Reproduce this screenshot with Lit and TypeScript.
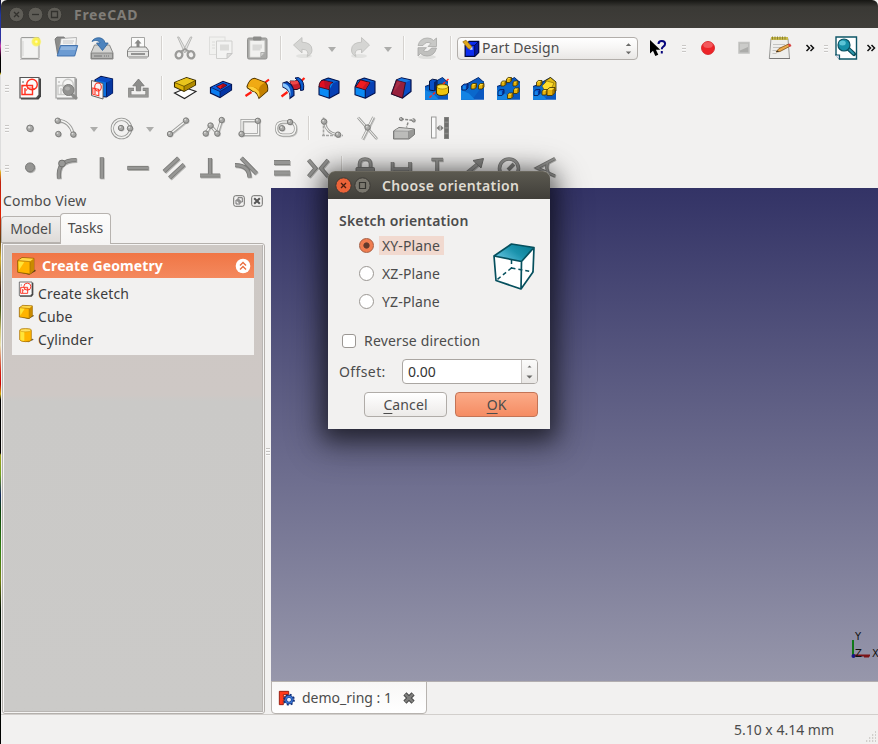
import { LitElement, html, svg, css, SVGTemplateResult } from "lit";
import { customElement, property } from "lit/decorators.js";

const node = (x: number, y: number, r = 2.7) => svg`
  <circle cx=${x + 0.8} cy=${y + 0.8} r=${r} fill="#999" opacity=".6"/>
  <circle cx=${x} cy=${y} r=${r} fill="#a9a9a7" stroke="#777775" stroke-width=".9"/>
  <circle cx=${x - 0.8} cy=${y - 0.9} r=${r * 0.35} fill="#dededc"/>`;

const tube = (d: string, w = 3) => svg`
  <path d=${d} transform="translate(.8 .8)" fill="none" stroke="#c2c2c0" stroke-width=${w}/>
  <path d=${d} fill="none" stroke="#999997" stroke-width=${w}/>
  <path d=${d} fill="none" stroke="#f4f4f2" stroke-width=${w - 1.5}/>`;

const bar = (d: string, w = 4.2) => svg`
  <path d=${d} transform="translate(.8 .9)" fill="none" stroke="#b3b3b1" stroke-width=${w}/>
  <path d=${d} fill="none" stroke="#787876" stroke-width=${w}/>
  <path d=${d} fill="none" stroke="#969694" stroke-width=${w - 1.6}/>`;

const cubelet = (x: number, y: number, s: number, front: string, top: string, side: string, line = "#3a2e00") => svg`
  <path d="M${x} ${y + s * 0.3}l${s * 0.35} ${-s * 0.3}h${s * 0.65}v${s * 0.65}l${-s * 0.35} ${s * 0.35}h${-s * 0.65}z" fill=${front}/>
  <path d="M${x} ${y + s * 0.3}l${s * 0.35} ${-s * 0.3}h${s * 0.65}l${-s * 0.35} ${s * 0.3}z" fill=${top}/>
  <path d="M${x + s * 0.65} ${y + s * 0.3}l${s * 0.35} ${-s * 0.3}v${s * 0.65}l${-s * 0.35} ${s * 0.35}z" fill=${side}/>
  <path d="M${x} ${y + s * 0.3}l${s * 0.35} ${-s * 0.3}h${s * 0.65}v${s * 0.65}l${-s * 0.35} ${s * 0.35}h${-s * 0.65}z" fill="none" stroke=${line} stroke-width=".8" stroke-linejoin="round"/>`;
const gold = (x: number, y: number, s: number) => cubelet(x, y, s, "#e8b40c", "#ffdc3a", "#a87c00");
const azure = (x: number, y: number, s: number) => cubelet(x, y, s, "#1284ec", "#0b5cd0", "#0638a0", "#06134e");

const sketchPage = (c: string) => svg`
  <path d="M3 2.5h20v18l-2.500 3H3z" fill="#444"/>
  <path d="M2 1.500h19v17.500l-2.500 3H2z" fill="#fbfbfb" stroke="#555" stroke-width="1.200"/>
  <path d="M5 5v2M4 6h2M5 10v1" stroke="#888" stroke-width=".8"/>
  <circle cx="14" cy="8.500" r="5.300" fill="none" stroke=${c} stroke-width="1.400"/>
  <path d="M4 9.500h10.500v9H4zM7 12v6" fill="none" stroke=${c} stroke-width="1.400"/>
  <path d="M8 15q1-5 9-2" fill="none" stroke=${c} stroke-width=".8"/>`;

const goldCube = svg`
  <path d="M6 20l17-3.500.8 1.500-8 4.500z" fill="#3a2c00" opacity=".8"/>
  <path d="M2 5.500l5-3.500 14.500.8v14.500l-4.500 4.500L2 19.500z" fill="#ffb400" stroke="#8a5a00" stroke-width="1"/>
  <path d="M2.500 5.500l5-3 13.500.8-4.500 3.500z" fill="#ffd84a"/>
  <path d="M16.800 7l4.500-4v14l-4.300 4.300z" fill="#c98a00"/>
  <path d="M2 5.500l14.800 1.300v14.700" fill="none" stroke="#a06a00" stroke-width=".8"/>
  <path d="M3 6.500l7 .7-6.500 10z" fill="#ffe438"/>`;

const blueSolid = svg`
  <path d="M2 11L4.700 4.500l6.600-2.500L22 5.300V17l-9.700 5.200L2 18.700z" fill="#0a8af4"/>
  <path d="M4.700 4.500l6.600-2.500L22 5.300l-5.700 1.500z" fill="#0b60d0"/>
  <path d="M12.300 13.700l4-7L22 5.300V17l-9.700 5z" fill="#0740b4"/>
  <path d="M2 11L4.700 4.500l6.600-2.500L22 5.300V17l-9.700 5.200L2 18.700zM12.300 13.700V22" fill="none" stroke="#06134e" stroke-width="1.100" stroke-linejoin="round"/>`;

const patternBase = svg`
  <path d="M0 10.500L4 9 17.500 1.500 23 6.500V23.700H0z" fill="#0a58c0"/>
  <path d="M0 12L23 5v3L11 23.700H0z" fill="#0a68cc"/>
  <path d="M0 23.700V14l8 3.500 6 6.200z" fill="#1484e4"/>
  <path d="M0 10.500L4 9 17.500 1.500 23 6.500" fill="none" stroke="#052a70" stroke-width="1"/>`;

const icons: Record<string, SVGTemplateResult> = {
  newDoc: svg`<defs><radialGradient id="g"><stop offset="0" stop-color="#fffde0"/><stop offset=".4" stop-color="#fff240"/><stop offset=".75" stop-color="#f8ef50" stop-opacity=".75"/><stop offset="1" stop-color="#fff68a" stop-opacity="0"/></radialGradient></defs>
    <path d="M2 23.300h20" stroke="#bbb" stroke-width="1"/>
    <rect x="3" y="1.500" width="18" height="21" rx="1" fill="#e9e9e7" stroke="#9c9c9a"/>
    <rect x="4.500" y="3" width="15" height="18" fill="#f3f3f2"/><path d="M5 5v15" stroke="#d5d5d3"/>
    <circle cx="18.300" cy="5.700" r="5.500" fill="url(#g)"/>`,
  open: svg`<path d="M1 3l2-2h7l1.500 2h8.500v15H3.500z" fill="#8c8c8a" stroke="#70706e" stroke-width=".8"/>
    <path d="M7 2.500l15.500-1-1 13H5z" fill="#f4f4f3" stroke="#999" stroke-width=".7"/><path d="M9 5h11M9 7h10" stroke="#bbb" stroke-width=".8"/>
    <path d="M6.500 9.500h17.200l-3 10.500H3.200z" fill="#6c9bd2" stroke="#3a6ba8" stroke-width=".9"/><path d="M7.300 10.500h15l-1 3.500H6z" fill="#8fb4de"/>`,
  save: svg`<path d="M4.500 9h15l3.500 8v6H1v-6z" fill="#d4d4d2" stroke="#8b8b89"/>
    <path d="M1.500 17h21v5.500h-21z" fill="#b3b3b1" stroke="#7c7c7a" stroke-width=".8"/><path d="M4 20h8M14 20h1M16 20h1M18 20h1" stroke="#777"/>
    <path d="M2 5.500C4 .5 14 0 15 7h3.200L12.500 14.500 6.500 7h3.500C9.300 4.300 5 3.800 2 5.500z" fill="#4c83be" stroke="#2f6299" stroke-width=".8"/>`,
  print: svg`<path d="M5.500 12V1.500h13V12" fill="#fbfbfa" stroke="#a6a6a4"/>
    <path d="M12 3.500l3.500 4h-2V11h-3V7.500h-2z" fill="#888886"/>
    <path d="M4 11h16l2.500 3.500v5.500q0 1-1 1h-19q-1 0-1-1v-5.500z" fill="#e6e6e4" stroke="#828280"/>
    <path d="M2 15.500h20" stroke="#aaa"/><path d="M5 18h14" stroke="#777" stroke-width="1.500"/><path d="M3 22.500h18" stroke="#c4c4c2"/>`,
  cut: svg`<path d="M4.500 1l1.500 0L14 15.500l-2.500 1zM19 1l-1.500 0L9.500 15.500l2.500 1z" fill="#e5e5e4" stroke="#b3b3b1" stroke-width=".9"/>
    <ellipse cx="6" cy="18.800" rx="3.300" ry="3.600" transform="rotate(30 6 18.800)" fill="none" stroke="#9b9b99" stroke-width="2.300"/>
    <ellipse cx="18" cy="18.800" rx="3.300" ry="3.600" transform="rotate(-30 18 18.800)" fill="none" stroke="#9b9b99" stroke-width="2.300"/>
    <path d="M8 15.500l4-2.500 4 2.500" stroke="#9b9b99" stroke-width="1.800" fill="none"/>`,
  copy: svg`<rect x=".5" y="1" width="15.500" height="17.500" fill="#f1f1ef" stroke="#dededc"/><path d="M3 6h3M3 9h3M3 12h3" stroke="#dcdcda"/>
    <path d="M7.500 5H23v12.500L18 22.500H7.500z" fill="#f3f3f2" stroke="#cfcfcd"/><path d="M11 9.500h9M11 11.500h9M11 13.500h9" stroke="#dcdcda" stroke-width="2"/><path d="M23 17.500h-5v5z" fill="#dcdcda" stroke="#bbb" stroke-width=".7"/>`,
  paste: svg`<rect x="2.500" y="2" width="19.500" height="21" rx="1.500" fill="#a9a9a7" stroke="#929290"/>
    <path d="M4.800 4.500h15v12l-4 4.800H4.800z" fill="#f1f1ef" stroke="#c0c0be" stroke-width=".6"/>
    <rect x="8" y=".5" width="8.500" height="4" rx="1" fill="#8c8c8a"/><path d="M7.500 9.500h9.500M7.500 11.500h9.500M7.500 13.500h8" stroke="#d9d9d7" stroke-width="2"/><path d="M19.800 16.500h-4v4.800z" fill="#d5d5d3" stroke="#9a9a98" stroke-width=".7"/>`,
  undo: svg`<ellipse cx="13" cy="20" rx="8" ry="2" fill="#e2e2e0"/><path d="M2.500 9L11 1.500v4.700q10 .3 10 7.800 0 4.500-5 6.500 1.500-3 .5-5-1.500-2.300-5.500-2.200V17z" fill="#d5d5d3" stroke="#bcbcba" stroke-width=".8"/>`,
  redo: svg`<ellipse cx="10" cy="20" rx="8" ry="2" fill="#e2e2e0"/><path d="M20.500 9L12.500 1.500v4.700q-10 .3-10 7.800 0 4.500 4.500 6.500-1.500-3-.5-5 1.500-2.300 6-2.200V17z" fill="#d5d5d3" stroke="#bcbcba" stroke-width=".8"/>`,
  refresh: svg`<ellipse cx="12" cy="21" rx="9" ry="2" fill="#dfdfdd"/><path d="M3 9.500Q5 2 12.500 2q4 0 6 2.500L21.500 2v8.500H13l3-3q-4.500-3-8 2z" fill="#c8c8c6" stroke="#a9a9a7" stroke-width=".8"/><path d="M21.500 12Q19.500 20 12 20q-4 0-6.500-2.500L3 20v-8.300h8.500l-3 3q4.500 2.500 8-2.700z" fill="#c0c0be" stroke="#a6a6a4" stroke-width=".8"/>`,
  workbench: svg`<path d="M4 8l5-5h12v14l-5 5H4z" fill="#0b2cf0" stroke="#00083c" stroke-width="1.600"/><path d="M16 8l5-5v14l-5 5z" fill="#0618a0" stroke="#00083c"/><path d="M4 8h12" stroke="#00083c"/><path d="M1 3.500L5 1.500l7.500 8-2 3.500-3-1z" fill="#dfa61c" stroke="#8b6400" stroke-width=".8"/><path d="M9.500 13.500l3.500-4 .5 4z" fill="#c8d8ff"/>`,
  whats: svg`<path d="M5 4v13.500l3-2.700 2.300 5.200 3-1.200-2.400-5h4.300z" fill="#000"/><path d="M13.500 8q0-3 3.300-3t3.300 2.800q0 1.800-1.800 2.800-1.500.8-1.500 2.600M16.800 15v2.500" fill="none" stroke="#06067c" stroke-width="2"/>`,
  record: svg`<circle cx="12" cy="12" r="6.500" fill="#ed2428" stroke="#d21c20" stroke-width=".8"/><ellipse cx="12" cy="9" rx="4.800" ry="3" fill="#f66a6c" opacity=".75"/>`,
  stop: svg`<rect x="7" y="6.500" width="10" height="10.500" fill="#acacaa" stroke="#c2c2c0" stroke-width="1.500"/><path d="M8 7.500h8v3.500l-8 3.500z" fill="#cbcbc9"/>`,
  edit: svg`<path d="M3 2.500h17l1.500 20H1.300z" fill="#eeeeec" stroke="#9a9a98"/><path d="M1.500 22.500h20.500" stroke="#777"/><path d="M3 1h17v3H3z" fill="#c8ba4c"/><path d="M4.500.5v3M7 .5v3M9.500.5v3M12 .5v3M14.500.5v3M17 .5v3" stroke="#857a2c" stroke-width=".9"/>
    <path d="M5 8.500h12M5 11.500h9M4.500 14.500h5M4.500 17.500h4" stroke="#c4c4c2"/><path d="M8 16l3-3.500L20.500 8l1.500 2.200L12 15.500z" fill="#e9a94b" stroke="#835316" stroke-width=".8"/><path d="M20 8.500l2-1 1.500 2.500-2 1z" fill="#d84040"/><path d="M8 16l2-1.500.8 1.300z" fill="#222"/>`,
  zoom: svg`<path d="M2 1h20.500v22H5.500L2 18.500z" fill="#fff" stroke="#0d5566" stroke-width="1.400"/><path d="M1 19h4.500v4.500" fill="#dde" stroke="#0d5566" stroke-width="1.200"/>
    <path d="M14.500 13l5.500 5" stroke="#0b4b59" stroke-width="4.200" stroke-linecap="round"/><path d="M15 13.300l4.500 4.300" stroke="#2c97ac" stroke-width="2" stroke-linecap="round"/><circle cx="10" cy="9" r="6" fill="#1690a8" stroke="#0b5262" stroke-width="1.200"/><ellipse cx="8.500" cy="7" rx="3.300" ry="2.500" fill="#5bc4d6"/>`,
  sketch: sketchPage("#ff3020"),
  viewSketch: svg`${sketchPage("#a6a6a4")}<path d="M1 1h23v23H1z" fill="#f0f0ee" opacity=".5"/><path d="M17 17.500l5 4.500" stroke="#8d8d8b" stroke-width="3.200" stroke-linecap="round"/><circle cx="14.500" cy="14" r="5.500" fill="#929290" stroke="#7c7c7a"/><ellipse cx="13.500" cy="12.500" rx="2.500" ry="2" fill="#aeaeac"/>`,
  mapSketch: svg`<path d="M5 4l6-3.500L22.500 3v14L16.500 21 5 20z" fill="#0b70e0" stroke="#06134e" stroke-width="1.200"/><path d="M5.500 4l5.500-3 11 2-5.500 3.500z" fill="#0c4cc4"/><path d="M16.500 6.500l6-3.500v14l-6 4z" fill="#0636a0"/><path d="M16.500 6.500v14" stroke="#06134e" stroke-width=".8"/>
    <path d="M1.500 4.500l11.500 3V23L1.500 19.500z" fill="#faf4f4" stroke="#555" stroke-width=".9"/><ellipse cx="8" cy="11" rx="3.300" ry="4" fill="none" stroke="#ff3020" stroke-width="1.100"/><path d="M2.800 12l6 1.500v6.300l-6-1.600zM5 13v5" fill="none" stroke="#ff3020" stroke-width="1.100"/>`,
  leave: svg`<path d="M8 13.300H3.800v6.700H21v-6.700h-4.200" fill="none" stroke="#7c7c7a" stroke-width="3.200"/><path d="M8 13.300H3.800v6.700H21v-6.700h-4.200" fill="none" stroke="#999997" stroke-width="1.800"/><path d="M12.500 3l5.700 6.800h-3.500v5h-4.400v-5H6.800z" fill="#8d8d8b" stroke="#747472" stroke-width=".8"/>`,
  pad: svg`<path d="M1.500 17L13 12l10 3.500L11.500 22.500z" fill="#fff" stroke="#222" stroke-width="1.100"/><path d="M1.500 6.500L13.500 1.500 22.500 4.500v4.500L11 15.500 1.500 11z" fill="#ddb205" stroke="#3a2c00" stroke-width="1.100"/><path d="M2 6.500l11.500-4.500 8.500 2.700L11 10z" fill="#e8c41c"/><path d="M11 10.500L22 5v4L11 15z" fill="#b08a00"/><path d="M1.500 6.500L11 10.300 22.500 4.500M11 10.300V15" fill="none" stroke="#4b3a00" stroke-width=".7"/>`,
  pocket: svg`<path d="M1.500 11.500L14 5.500l8.500 3v5.500L11 21.500 1.500 17z" fill="#0b7cf0" stroke="#06134e" stroke-width="1.200"/><path d="M2 11.500l12-5.500 8 2.700L11 15.500z" fill="#0b5cdc"/><path d="M11 15.500l11.200-6.800v5.100L11 21z" fill="#0434a4"/><path d="M2 11.500L11 15.500 22.300 8.700M11 15.500V21" fill="none" stroke="#06134e" stroke-width=".7"/><path d="M7.500 10.500l6.500-3 4 1.700-6.500 4z" fill="#f01818" stroke="#06134e" stroke-width=".8"/><path d="M12 11l2-3.300 3.700 1.500-5 3z" fill="#9c0c20"/>`,
  revolve: svg`<path d="M.5 20l6-4M17.500 8.500l6.500-5" stroke="#ff1c10" stroke-width="2.200"/><path d="M2 10.500Q4.500 3 9.500 2.200L20.500 6.500q3 3 2 8.500L14 22.300q-2-7-6-6.800L2.500 12z" fill="#dd9600" stroke="#4f3500" stroke-width="1.100"/><path d="M2.500 10.500Q4.500 3.500 9.500 2.800L20 6.800q-5 1.500-6.500 6.700Q8 9 2.500 10.500z" fill="#f0aa14"/><path d="M2.500 11q5-1.500 9.500 2.500t2 8q-2-6-6-6.500z" fill="#ffcf3a"/><path d="M14 13.500q1-5 6-6.500 3 3 2 8L14.300 21.500q.7-4-.3-8z" fill="#c48000"/>`,
  groove: svg`<path d="M.5 20.500l6-4.500M17 8l6.500-6" stroke="#ff1c10" stroke-width="2.200"/><path d="M9 5q5 1 9-1.500l2 8q-4 3-8 2z" fill="#c8202c" stroke="#2e0a20"/><path d="M9 5q5 1 8-1l1 3q-5 2.500-8 1z" fill="#f04848"/>
    <path d="M14 2l3.500-.5Q24 5 22.500 14l-3 .5Q21 7 14 2z" fill="#0a5cd0" stroke="#06134e"/><path d="M2 7l4-1.300Q14 10 13 19.500l-4 2.800Q10 14 2 11z" fill="#0a50c0" stroke="#06134e" stroke-width="1.100"/><path d="M2 7.300q9 1.700 7.300 14.200Q9.500 14 2 10.500z" fill="#8cc8ff"/>`,
  fillet: svg`${blueSolid}<path d="M2 11Q2 4.500 6.500 4.200L16 6.500q-4 .5-3.700 7.200z" fill="#e01020" stroke="#300818" stroke-width=".8"/><path d="M7 5l8 1.800Q12 8 11.500 12.500L8 11.500z" fill="#b81028"/>`,
  chamfer: svg`${blueSolid}<path d="M2.500 11L7.500 3.800 17 6.500l-4.700 7.300z" fill="#f01c20" stroke="#300818" stroke-width=".9"/><path d="M9 12.500l5-6.500 2.500.8-4.200 6.700z" fill="#c81824"/>`,
  draft: svg`<path d="M2.500 18L7.500 4l5-2.200L22 4v11.500L13.500 22z" fill="#0a50c8" stroke="#06134e" stroke-width="1.200"/><path d="M2.500 18L7.500 4l9 2.500L13.500 22z" fill="#98203c" stroke="#300818" stroke-width=".8"/><path d="M8 4l4.500-1.800L21.500 4.200 16.700 6.300z" fill="#1a78e0"/><path d="M4 17l4-11.500 4 1z" fill="#b03850" opacity=".6"/>`,
  mirror: svg`${patternBase}<path d="M4.500 5l3-1.800 4.500.8v9l-3 1.800-4.500-.8z" fill="#0850c8" stroke="#03123e" stroke-width="1"/><path d="M9 6.300l3-2v9l-3 1.700z" fill="#04246c"/><path d="M11.500 11q0-3 5.500-3t6.500 3v6q-1.500 2.500-6.500 2.500t-5.500-2.500z" fill="#f0c40c" stroke="#3b2c00" stroke-width="1"/><ellipse cx="17.500" cy="10.800" rx="5.500" ry="2.200" fill="#ffe850" stroke="#6b5100" stroke-width=".5"/><path d="M4.500 21.500L10 16.500M18 8l5.500-5" stroke="#ff2818" stroke-width="1.500" stroke-dasharray="3 1.500"/>`,
  linear: svg`${patternBase}${azure(1, 8, 6)}${gold(10, 7.5, 5.5)}${gold(17.5, 7.5, 5.5)}`,
  polar: svg`${patternBase}${gold(9.500, 1.5, 5)}${gold(4, 5, 5)}${gold(16, 5, 5)}${azure(1, 13.5, 6)}${gold(16.5, 12, 5.5)}${gold(10.5, 17, 5.5)}`,
  multi: svg`${patternBase}<path d="M12 5l5.500-3.500L23 6v9l-8-2z" fill="#e0ba18" stroke="#3a2e00" stroke-width=".8"/>${gold(3.500, 4.5, 5.5)}<path d="M9 10l5-5 7 2-3 6-6 2z" fill="#ffdc2c" stroke="#5a4800" stroke-width=".5"/>${azure(1, 13.5, 6)}${gold(9, 13.5, 5.500)}${gold(14, 11.5, 8)}`,
  point: node(12, 12.3, 3.3),
  arc: svg`${tube("M4 4.500Q16 5 19 18")}${node(3.7, 4.7)}${node(4.3, 18)}${node(19.3, 18.5)}`,
  circle: svg`<circle cx="11.500" cy="12.500" r="9.200" fill="none" stroke="#949492" stroke-width="3.200"/><circle cx="11.500" cy="12.500" r="9.200" fill="none" stroke="#f0f0ee" stroke-width="1.700"/>${node(11, 12)}${node(20, 12.3)}`,
  line: svg`${tube("M4 18L20 5")}${node(4, 18)}${node(20, 4.5)}`,
  poly: svg`${tube("M3.700 17.500L8.500 9.500 15.300 17.300 19.500 4")}${node(3.7, 17.5)}${node(8.5, 9.5)}${node(15.3, 17.5)}${node(19.7, 4)}`,
  rect: svg`${tube("M4 4.500H20.500V18.500H4z")}${node(3.5, 18)}${node(19.8, 4.8)}`,
  slot: svg`${tube("M8.500 6H15.500Q21.500 6.500 21.500 12.500T15.500 19H8.500Q2.500 18.500 2.500 12.500T8.500 6z")}${node(8, 12.2)}${node(16, 6)}`,
  skFillet: svg`<path d="M3.500 1.500V20M2 19.500H23" fill="none" stroke="#a5a5a3" stroke-width="1.600" stroke-dasharray="3 1"/>${tube("M4.500 7Q6.500 17 17 18.500", 2.6)}${node(4, 5.5)}${node(18, 18.6)}`,
  trim: svg`${tube("M2 1.500L20.500 22.500M17.500 1L6.500 23", 2.6)}${node(11.5, 11.5)}`,
  external: svg`<path d="M1.500 15L7 11.500 22.500 13V18.500L17 23H1.500z" fill="#989896" stroke="#777775"/><path d="M2 15h14.500v7.500H2z" fill="#bcbcba" stroke="#888886" stroke-width=".7"/><path d="M2.500 14.500L7 12l14.500 1.200-5 1.500z" fill="#d0d0ce"/><path d="M9 3l13 1.500M16 6.500l-1.500 5" stroke="#888886" stroke-width="1.500" stroke-dasharray="3 1.200"/>${node(9, 3, 1.6)}${node(21.5, 4.3, 1.6)}`,
  carbon: svg`<rect x="3.500" y="1" width="4.500" height="21" fill="#fafafa" stroke="#999997"/><path d="M8.500 12l3.200-3v6zM15.700 12l-3.200-3v6z" fill="#80807e"/><path d="M18.500 1v22" stroke="#8b8b89" stroke-width="5"/><path d="M18.500 1.500v21" stroke="#70706e" stroke-width="3.600" stroke-dasharray="4 1.600"/>`,
  cPoint: svg`<circle cx="12.800" cy="12.200" r="5" fill="#b3b3b1"/><circle cx="12" cy="11.400" r="4.500" fill="#959593" stroke="#787876"/>`,
  cTan: svg`${bar("M5 22.500Q4 13 8 8.500T22.500 4")}<circle cx="8" cy="7.500" r="3.400" fill="#999997" stroke="#70706e"/>`,
  cVert: bar("M11.800 1.300V22.500"),
  cHor: bar("M1.300 12H22.500"),
  cPar: bar("M2 15.500L16.500 2M7.500 22L22 8.500"),
  cPerp: bar("M12 2V18M2 19.500H22"),
  cTangent: bar("M7.300 2L22.500 17.500M1 9.200Q15 9 15.500 21.500"),
  cEqual: bar("M4 6.500H20M4 17H20", 5),
  cSym: bar("M2.500 4L9.500 12.300 2.500 20.500M22 4L15 12.300 22 20.500", 4),
  cLock: svg`${bar("M6.500 13V8q0-5 5.500-5t5.500 5v5", 3.600)}<rect x="3" y="11.500" width="18.500" height="11" rx="1" fill="#8e8e8c" stroke="#757573"/>`,
  cHd: bar("M3.500 6V19M21 6V19M3.500 13H21", 3.6),
  cVd: bar("M6.500 3.500H18M12 3.500V22", 3.6),
  cLen: svg`${bar("M4 18.500L18 7", 4)}<path d="M22.500 2.500L20 12 12 4.500z" fill="#888886" stroke="#70706e"/>`,
  cRad: svg`<circle cx="12" cy="12.500" r="9.500" fill="none" stroke="#787876" stroke-width="3.600"/><circle cx="12" cy="12.500" r="9.500" fill="none" stroke="#969694" stroke-width="2.200"/><path d="M11 14l6-6" stroke="#7c7c7a" stroke-width="4"/>`,
  cAng: bar("M22 2.500L4 12 22 20M15 6q-3 6 1 12", 3.2),
  cube: goldCube,
  cylinder: svg`<path d="M6 20.500l16-3 1.500 1.500-8 4z" fill="#3a2c00" opacity=".7"/><path d="M2.500 5q0-2.500 9-2.500T20 5v14q-1 3-8.500 3t-9-3z" fill="#ffb400" stroke="#a87000" stroke-width="1.100"/><path d="M3.500 6.500h6v14.500q-5-.5-6-2z" fill="#ffe438"/><ellipse cx="11.300" cy="5" rx="8" ry="2.300" fill="#ffe060" stroke="#c08a00" stroke-width=".7"/>`,
  app: svg`<path d="M2 2h14v5H8v3h6v5H8v7H2z" fill="#ff3a1c" stroke="#8c1206" stroke-width="1.300"/><circle cx="16.500" cy="14.500" r="5" fill="#e8f0ff" stroke="#10307c" stroke-width="4"/><circle cx="16.500" cy="14.500" r="7.500" fill="none" stroke="#10307c" stroke-width="2.600" stroke-dasharray="3 2.900"/><circle cx="16.500" cy="14.500" r="4.800" fill="none" stroke="#3a78d8" stroke-width="2"/>`,
  close: svg`<path d="M5 5l14 14m0-14l-14 14" stroke="#444" stroke-width="7.500"/><path d="M5 5l14 14m0-14l-14 14" stroke="#7e7e7c" stroke-width="4.500"/>`,
};

type Item = [kind: string, width?: number];
const icon = (...names: string[]): Item[] => names.map((n) => [n, 36] as Item);

const rows: Item[][] = [
  [["grip", 11], ...icon("newDoc", "open", "save", "print"), ["sep", 11], ...icon("cut", "copy", "paste"), ["sep", 11],
    ["undo", 34], ["drop", 24], ["redo", 34], ["drop", 20], ["sep", 11], ["refresh", 36], ["sep", 12], ["combo", 181],
    ["whats", 38], ["grip", 14], ...icon("record", "stop", "edit"), ["more", 24], ["grip", 6], ["zoom", 35], ["more", 15]],
  [["grip", 11], ...icon("sketch", "viewSketch", "mapSketch", "leave"), ["sep", 11],
    ...icon("pad", "pocket", "revolve", "groove", "fillet", "chamfer", "draft", "mirror", "linear", "polar", "multi")],
  [["grip", 11], ...icon("point", "arc"), ["drop", 20], ["circle", 36], ["drop", 20], ...icon("line", "poly", "rect", "slot"), ["sep", 10],
    ...icon("skFillet", "trim", "external", "carbon")],
  [["grip", 11], ...icon("cPoint", "cTan", "cVert", "cHor", "cPar", "cPerp", "cTangent", "cEqual", "cSym"), ["sep", 11],
    ...icon("cLock", "cHd", "cVd", "cLen", "cRad", "cAng")],
];

@customElement("cad-icon")
class CadIcon extends LitElement {
  @property() name = "";
  @property({ type: Number }) size = 24;
  static styles = css`
    :host { display: block; flex: none; line-height: 0; }
    svg { display: block; overflow: visible; }
  `;
  render() {
    return html`<svg width=${this.size} height=${this.size} viewBox="0 0 24 24">${icons[this.name]}</svg>`;
  }
}

@customElement("cad-toolbar")
class CadToolbar extends LitElement {
  @property({ attribute: false }) items: Item[] = [];
  static styles = css`
    :host { display: flex; height: 40px; align-items: center; overflow: hidden; }
    .cell { display: flex; flex: none; height: 40px; align-items: center; justify-content: center; }
    .grip { width: 4px; height: 8px; margin: 2px 0 0 1px; background: repeating-linear-gradient(#c9c7c5 0 1px, #fafafa 1px 2px, transparent 2px 3px); }
    .sep { width: 1px; height: 24px; background: #d5d2cf; border-right: 1px solid #fbfbfa; }
    .drop { border: 4px solid transparent; border-top: 5px solid #adadab; border-bottom: 0; margin-top: 2px; }
    .more { display: block; }
    .combo { box-sizing: border-box; width: 181px; height: 23px; border: 1px solid #b2aeaa; border-radius: 4px; display: flex; align-items: center;
      padding: 0 5px 0 4px; background: linear-gradient(#fff, #f7f6f5 45%, #e9e7e5); font: 14px/20px "Noto Sans", sans-serif; color: #4c4c4c; }
    .value { flex: 1; margin-left: 1px; letter-spacing: .09px; }
    .arrows { display: block; margin-left: auto; }
  `;
  cell(kind: string) {
    switch (kind) {
      case "grip": return html`<div class="grip"></div>`;
      case "sep": return html`<div class="sep"></div>`;
      case "drop": return html`<div class="drop"></div>`;
      case "more": return html`<svg class="more" width="10" height="8" viewBox="0 0 10 8"><path d="M1.500 1l3 3-3 3M5.500 1l3 3-3 3" fill="none" stroke="#111" stroke-width="1.500"/></svg>`;
      case "combo": return html`<div class="combo"><cad-icon name="workbench" size="19"></cad-icon><span class="value">Part Design</span>
        <svg class="arrows" width="7" height="13" viewBox="0 0 7 13"><path d="M.8 4L3.500 1.300 6.200 4zM.8 9.500l2.700 2.700L6.200 9.500z" fill="#6a6a68"/></svg></div>`;
      default: return html`<cad-icon name=${kind}></cad-icon>`;
    }
  }
  render() {
    return this.items.map(([kind, w]) => html`<div class="cell" style="width:${w}px">${this.cell(kind)}</div>`);
  }
}

@customElement("orientation-dialog")
class OrientationDialog extends LitElement {
  static styles = css`
    :host { display: flex; flex-direction: column; width: 222px; height: 258px; border-radius: 7px 7px 0 0; background: #f2f1f0; color: #4c4c4c;
      font: 14px/20px "Noto Sans", sans-serif; box-shadow: 0 5px 22px 5px rgba(0,0,0,.5), 0 10px 36px 8px rgba(0,0,0,.3); }
    .title { height: 28px; flex: none; box-sizing: border-box; display: flex; align-items: center; padding-left: 7px; border-radius: 7px 7px 0 0;
      background: linear-gradient(#5b5950, #403e39); border-top: 1px solid #6b685e; color: #dfdbd2; font-weight: 600; }
    .title svg { flex: none; margin-right: 2px; }
    .title span { margin-left: 9px; letter-spacing: .36px; white-space: nowrap; }
    .body { flex: 1; padding: 12px 12px 12px 11px; display: flex; flex-direction: column; }
    .heading { font-weight: 600; height: 20px; letter-spacing: .18px; }
    .choice { display: flex; height: 88px; }
    .radios { width: 136px; padding: 0 0 0 20px; flex: none; box-sizing: border-box; }
    .radio { display: flex; align-items: center; height: 28px; }
    .dot { box-sizing: border-box; width: 15px; height: 15px; border-radius: 50%; border: 1px solid #9b9793; background: #fff; margin-right: 5px; flex: none; }
    .dot.on { background: radial-gradient(circle, #623a2c 0 2.700px, #f07d50 3.500px); border-color: #a65c40; }
    .name { padding: 0 4px 0 3px; height: 19px; line-height: 19px; letter-spacing: .1px; }
    .name.on { background: #f1d9cf; }
    .preview { margin: 10px 0 0 15px; display: block; overflow: visible; flex: none; }
    .check { display: flex; align-items: center; height: 20px; margin: 12px 0 0 3px; letter-spacing: .17px; }
    .box { box-sizing: border-box; width: 14px; height: 14px; border: 1px solid #9b9793; border-radius: 3px; background: #fff; margin-right: 8px; }
    .offset { display: flex; align-items: center; height: 25px; margin-top: 8px; }
    .offset label { width: 63px; letter-spacing: .4px; }
    .spin { flex: 1; height: 23px; display: flex; border: 1px solid #aaa6a2; border-radius: 4px; background: #fff; color: #333; overflow: hidden; }
    .num { flex: 1; padding-left: 5px; line-height: 24px; }
    .steps { width: 15px; border-left: 1px solid #c8c5c2; background: linear-gradient(#fbfbfa, #e9e7e5); display: flex; align-items: center; justify-content: center; }
    .buttons { display: flex; justify-content: flex-end; gap: 8px; margin-top: 8px; }
    .button { box-sizing: border-box; width: 83px; height: 25px; border: 1px solid #b0aca8; border-radius: 4px; text-align: center; line-height: 24px; background: linear-gradient(#fff, #eceae8); letter-spacing: .1px; }
    .button.ok { background: linear-gradient(#fbab88, #f58c63); border-color: #c37456; letter-spacing: 0; }
    u { text-underline-offset: 3px; text-decoration-thickness: 1px; }
  `;
  render() {
    return html`
      <div class="title">
        <svg width="17" height="17" viewBox="0 0 17 17"><circle cx="8.500" cy="8.500" r="7.700" fill="#ec6338" stroke="#3c3a36"/><path d="M6 6l5 5m0-5l-5 5" stroke="#4a1e10" stroke-width="1.300"/></svg>
        <svg width="17" height="17" viewBox="0 0 17 17"><circle cx="8.500" cy="8.500" r="7.700" fill="#7a776e" stroke="#3c3a36"/><path d="M5.500 5.500h6v6h-6z" fill="none" stroke="#34332f" stroke-width="1.200"/></svg>
        <span>Choose orientation</span>
      </div>
      <div class="body">
        <div class="heading">Sketch orientation</div>
        <div class="choice">
          <div class="radios">
            ${["XY-Plane", "XZ-Plane", "YZ-Plane"].map((n, i) => html`<div class="radio"><i class="dot ${i ? "" : "on"}"></i><span class="name ${i ? "" : "on"}">${n}</span></div>`)}
          </div>
          <svg class="preview" width="46" height="50" viewBox="0 0 46 50">
            <defs><linearGradient id="top" x1="0" y1=".8" x2="1" y2=".2"><stop offset="0" stop-color="#6cc8e4"/><stop offset=".55" stop-color="#1b93ad"/><stop offset="1" stop-color="#087b91"/></linearGradient></defs>
            <path d="M21 3L44.500 6.500 43 31 32 48 6 39.500 3.500 15z" fill="#fff"/>
            <path d="M21.500 3L44 6.500 31.500 20.500 4 15z" fill="url(#top)"/>
            <path d="M21.500 19V27M21.500 27L6 39.500M21.500 27L43 31" fill="none" stroke="#06505e" stroke-width="1.500" stroke-dasharray="4 3"/>
            <path d="M21.500 3L44 6.500 43 31 31 48 6 39.500 4 15zM4 15l27.500 5.500L44 6.500M31.500 20.500L31 48" fill="none" stroke="#06505e" stroke-width="1.700" stroke-linejoin="round"/>
          </svg>
        </div>
        <div class="check"><i class="box"></i>Reverse direction</div>
        <div class="offset"><label>Offset:</label>
          <div class="spin"><span class="num">0.00</span><span class="steps"><svg width="7" height="17" viewBox="0 0 7 17"><path d="M1.500 4.500l2-2 2 2zM.5 12.500h6L3.500 15.500z" fill="#6a6a68"/></svg></span></div>
        </div>
        <div class="buttons"><div class="button"><u>C</u>ancel</div><div class="button ok"><u>O</u>K</div></div>
      </div>`;
  }
}

@customElement("app-root")
class AppRoot extends LitElement {
  static styles = css`
    :host { display: grid; grid-template-columns: 1px 877px; width: 878px; height: 744px; overflow: hidden; position: relative;
      font: 14px/20px "Noto Sans", sans-serif; color: #4c4c4c; background: #f2f1f0; }
    .edge { background: linear-gradient(#101030 0, #2038a0 15px, #3030a0 40px, #d040b0 46px, #400030 54px, #000 58px, #000 72px, #d0c020 74px, #ddd 75px, #ddd 169px, #e0b020 172px, #c02010 182px, #e02000 215px, #604010 240px, #d0b030 258px, #402010 290px, #405010 310px, #c8c070 330px, #e8e0b0 345px, #d02010 372px, #c00 384px, #d0b010 394px, #000 400px, #000 453px, #a0a020 455px, #70a020 475px, #102860 495px, #084008 510px, #308010 550px, #708010 580px, #001000 610px, #000 744px); }
    .window { display: flex; flex-direction: column; min-width: 0; }
    .title { height: 28px; flex: none; box-sizing: border-box; display: flex; align-items: center; gap: 2px; padding: 1px 0 0 7px; background: linear-gradient(#161613, #3a3935 25%, #403e3a); border-radius: 6px 6px 0 0;
      color: #807d78; font-weight: 700; }
    .title span { margin-left: 9px; letter-spacing: .7px; }
    .main { display: flex; flex: none; height: 526px; }
    .side { width: 270px; flex: none; display: flex; position: relative; flex-direction: column; }
    .dock { display: flex; align-items: center; height: 25px; padding: 0 8px 0 2px; gap: 5px; flex: none; }
    .dock span { flex: 1; letter-spacing: .17px; }
    .dock svg { margin-right: 0.500px; }
    .tabs { display: flex; align-items: flex-end; height: 30px; flex: none; z-index: 1; }
    .tab { box-sizing: border-box; border: 1px solid #b7b3af; text-align: center; }
    .tab.model { width: 59px; height: 27px; border-radius: 4px 0 0 0; line-height: 24px; background: linear-gradient(#f0efee, #dedbd8); border-right: 0; }
    .tab.tasks { width: 51px; height: 31px; margin-bottom: -1px; border-bottom: 0; border-radius: 4px 4px 0 0; background: linear-gradient(#fcfcfb, #f5f4f3); line-height: 28px; }
    .page { width: 261px; flex: 1; margin-left: 1px; border: 1px solid #b4b0ac; border-radius: 0 3px 3px 3px; background: #f5f4f3; display: flex; }
    .scroll { flex: 1; margin: 1px; border: solid #b9b6b3; border-width: 0 1px 1px 0; background: linear-gradient(#cdc8c4, #cec8c5 150px, #cac9c7 156px, #cbcac8); }
    .task { width: 242px; margin: 8px 0 0 8px; background: #f2f1f0; height: 102px; }
    .head { height: 25px; display: flex; align-items: center; padding: 0 3px 0 4px; color: #fff; font-weight: 700; background: linear-gradient(#f07645, #f4895e); }
    .head span { flex: 1; margin-left: 6px; white-space: nowrap; letter-spacing: .1px; }
    .entry { display: flex; height: 23px; padding-left: 6px; color: #3c3c3c; gap: 4px; letter-spacing: .15px; }
    .entry cad-icon { margin-top: 0; }
    .entry span { margin-top: 3px; }
    .list { padding-top: 3px; }
    .splitgrip { width: 4px; height: 8px; position: absolute; left: 265px; top: 260px; background: repeating-linear-gradient(#c4c2c0 0 1px, #fafafa 1px 2px, transparent 2px 3px); }
    .mdi { flex: 1; display: flex; flex-direction: column; min-width: 0; }
    .view { height: 493px; flex: none; background: linear-gradient(#333366, #9797ab); display: flex; justify-content: flex-end; align-items: flex-end; }
    .axes { display: block; margin: 0 0 17px; }
    .axes text { font: 10px "DejaVu Sans", sans-serif; fill: #111; }
    .doctabs { border-top: 1px solid #b2aeb0; flex: 1; }
    .doctab { box-sizing: border-box; width: 156px; height: 33px; margin-top: -1px; border: 1px solid #b7b3af; border-radius: 0 0 4px 4px; background: linear-gradient(#f8f7f6, #fff); display: flex; align-items: center; padding: 0 10px 0 6px; }
    .doctab span { margin-left: 8px; flex: 1; white-space: nowrap; padding-top: 1px; }
    .status { flex: 1; border-top: 1px solid #d2cfcc; display: flex; justify-content: flex-end; align-items: center; padding: 1px 44px 0 0; position: relative; }
    .resize { position: absolute; right: 2px; bottom: 2px; }
    orientation-dialog { position: absolute; left: 328px; top: 171px; }
  `;
  windowButton(d: string) {
    return html`<svg width="17" height="17" viewBox="0 0 17 17"><circle cx="8.500" cy="8.500" r="7.300" fill="#5f5d57" stroke="#383733"/><path d=${d} fill="none" stroke="#33322e" stroke-width="1.300"/></svg>`;
  }
  render() {
    return html`
      <div class="edge"></div>
      <div class="window">
        <div class="title">
          ${["M6 6l5 5m0-5l-5 5", "M5 8.500h7", "M5.500 5.500h6v6h-6z"].map((d) => this.windowButton(d))}
          <span>FreeCAD</span>
        </div>
        ${rows.map((r) => html`<cad-toolbar .items=${r}></cad-toolbar>`)}
        <div class="main">
          <div class="side">
            <div class="dock"><span>Combo View</span>
              <svg width="12" height="12" viewBox="0 0 12 12"><rect x=".7" y=".7" width="10.600" height="10.600" rx="2" fill="none" stroke="#6e6e6c"/><path d="M5 2.700h4.300V7H5zM3 5h4v4H3z" fill="#f2f1f0" stroke="#666" stroke-width=".9"/></svg>
              <svg width="12" height="12" viewBox="0 0 12 12"><rect x=".7" y=".7" width="10.600" height="10.600" rx="2" fill="none" stroke="#6e6e6c"/><path d="M3.200 3.200l5.600 5.600m0-5.600L3.200 8.800" stroke="#555" stroke-width="2"/></svg>
            </div>
            <div class="tabs"><div class="tab model">Model</div><div class="tab tasks">Tasks</div></div>
            <div class="page"><div class="scroll">
              <div class="task">
                <div class="head"><cad-icon name="cube" size="20"></cad-icon><span>Create Geometry</span>
                  <svg width="16" height="16" viewBox="0 0 16 16"><circle cx="8" cy="8" r="7.300" fill="#fff"/><path d="M5 7.500l3-3 3 3M5 11.500l3-3 3 3" fill="none" stroke="#ea6d3f" stroke-width="1.400"/></svg></div>
                <div class="list">
                  <div class="entry"><cad-icon name="sketch" size="16"></cad-icon><span>Create sketch</span></div>
                  <div class="entry"><cad-icon name="cube" size="16"></cad-icon><span>Cube</span></div>
                  <div class="entry"><cad-icon name="cylinder" size="16"></cad-icon><span>Cylinder</span></div>
                </div>
              </div>
            </div></div>
            <div class="splitgrip"></div>
          </div>
          <div class="mdi">
            <div class="view">
              <svg class="axes" width="30" height="36" viewBox="0 0 30 36">
                <path d="M5 12v16" stroke="#107818" stroke-width="2"/><path d="M6 27.500h16" stroke="#7c1418" stroke-width="2"/><path d="M16 28.500h5" stroke="#7c1418" stroke-width="2"/><circle cx="5.500" cy="28" r="2" fill="#181884"/>
                <text x="7" y="12">Y</text><text x="7" y="29">Z</text><text x="24" y="29">X</text>
              </svg>
            </div>
            <div class="doctabs"><div class="doctab"><cad-icon name="app" size="16"></cad-icon><span>demo_ring : 1</span><cad-icon name="close" size="14"></cad-icon></div></div>
          </div>
        </div>
        <div class="status">5.10 x 4.14 mm
          <svg class="resize" width="11" height="11" viewBox="0 0 11 11"><path d="M1 10h10M4 7h7M7 4h4M10 1h1" stroke="#c6c3c0" stroke-width="1.300" stroke-dasharray="1.300 1.700"/></svg>
        </div>
      </div>
      <orientation-dialog></orientation-dialog>`;
  }
}
